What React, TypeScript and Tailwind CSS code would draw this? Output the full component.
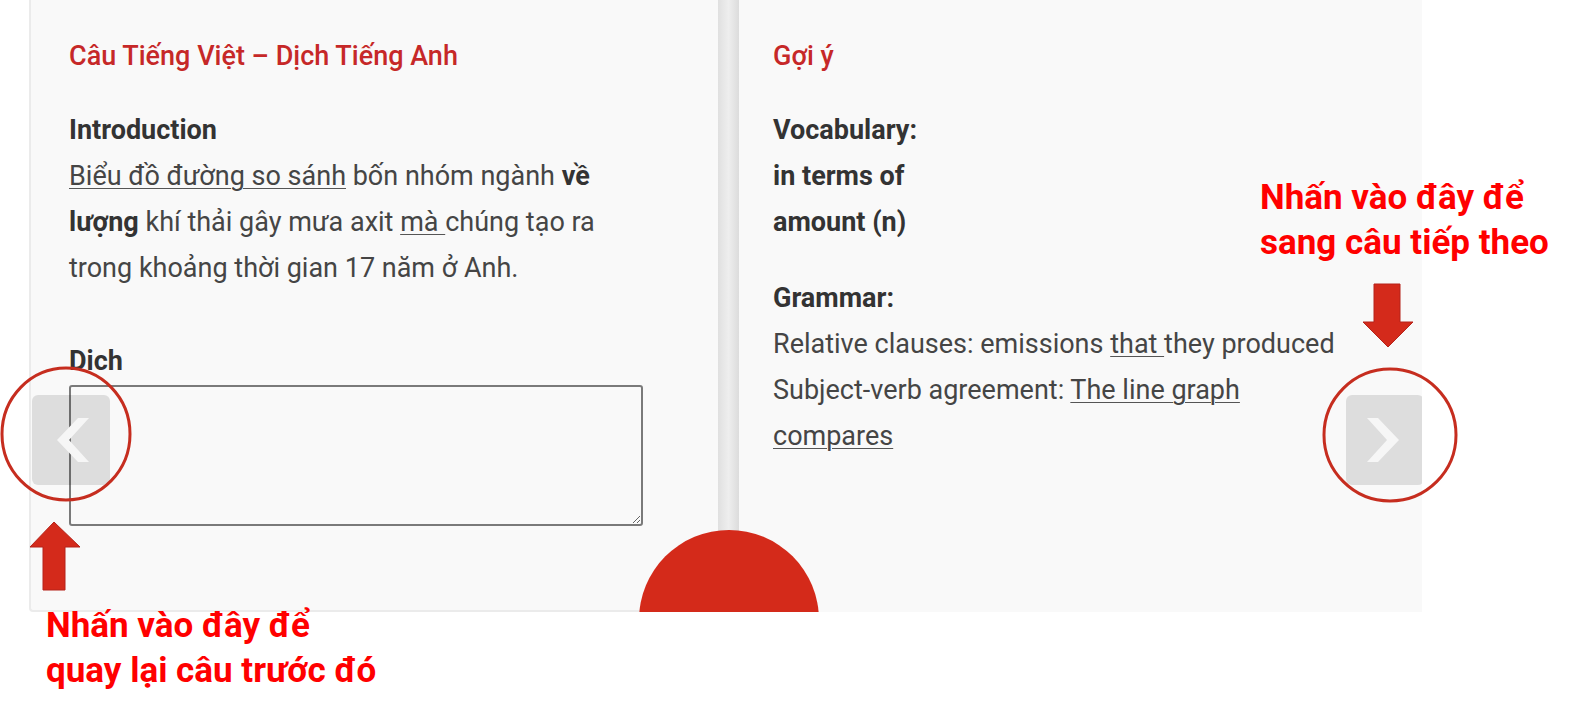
import React from "react";

function Chevron({ dir }: { dir: "left" | "right" }) {
    const pts =
        dir === "left"
            ? "25,45 46,23 57,23 37,45 57,67 46,67"
            : "53,45 32,23 21,23 41,45 21,67 32,67";
    return (
        <svg width="78" height="90" viewBox="0 0 78 90" className="block">
            <polygon points={pts} fill="#f6f6f6" />
        </svg>
    );
}

function Underlined({ children }: { children: React.ReactNode }) {
    return (
        <span className="underline decoration-[#555] decoration-1 underline-offset-[3px]">
            {children}
        </span>
    );
}

export default function App() {
    return (
        <div className="relative w-[1596px] h-[713px] bg-white overflow-hidden font-[Roboto,'Noto_Sans',sans-serif]">
            <div className="pl-[29px]">
                <div className="relative flex h-[612px] w-[1393px] overflow-hidden">
                    {/* left panel */}
                    <div className="w-[689px] bg-[#f9f9f9] border-l-2 border-b-2 border-[#ebebeb] rounded-bl-[4px] pl-[38px] pt-[33px] text-[27px] leading-[46px] text-[#454545]">
                        <h2 className="font-medium text-[#c62828]">Câu Tiếng Việt – Dịch Tiếng Anh</h2>
                        <div className="mt-[28px] font-bold text-[#333]">Introduction</div>
                        <p>
                            <Underlined>Biểu đồ đường so sánh</Underlined> bốn nhóm ngành{" "}
                            <b className="text-[#333]">về</b>
                            <br />
                            <b className="text-[#333]">lượng</b> khí thải gây mưa axit <Underlined>mà </Underlined>chúng tạo ra
                            <br />
                            trong khoảng thời gian 17 năm ở Anh.
                        </p>
                        <div className="mt-[47px] font-bold text-[#333]">Dich</div>
                        <textarea className="mt-[1px] block w-[574px] h-[141px] border-2 border-[#7a7a7a] rounded-[3px] bg-transparent outline-none" />
                    </div>

                    {/* divider */}
                    <div className="w-[21px] bg-linear-to-r from-[#e0e0e0] via-[#eeeeee] to-[#dcdcdc]" />

                    {/* right panel */}
                    <div className="w-[683px] bg-[#f9f9f9] pl-[34px] pt-[33px] text-[27px] leading-[46px] text-[#454545]">
                        <h2 className="font-medium text-[#c62828]">Gợi ý</h2>
                        <div className="mt-[28px] font-bold text-[#333]">
                            <div>Vocabulary:</div>
                            <div>in terms of</div>
                            <div>amount (n)</div>
                        </div>
                        <div className="mt-[30px] font-bold text-[#333]">Grammar:</div>
                        <div>
                            Relative clauses: emissions <Underlined>that </Underlined>they produced
                        </div>
                        <div>
                            Subject-verb agreement: <Underlined>The line graph</Underlined>
                        </div>
                        <div>
                            <Underlined>compares</Underlined>
                        </div>
                    </div>

                    {/* check button */}
                    <div className="absolute left-[610px] top-[530px] w-[180px] h-[180px] rounded-full bg-[#d42a1a]" />

                    {/* prev / next */}
                    <button className="absolute left-[3px] top-[395px] w-[78px] h-[90px] rounded-[6px] bg-black/[0.11]">
                        <Chevron dir="left" />
                    </button>
                    <button className="absolute left-[1317px] top-[395px] w-[78px] h-[90px] rounded-[6px] bg-black/[0.11]">
                        <Chevron dir="right" />
                    </button>
                </div>
            </div>

            {/* annotations */}
            <svg className="absolute left-0 top-0 pointer-events-none" width="1596" height="713">
                <ellipse cx="66" cy="434" rx="64" ry="66" fill="none" stroke="#c62d1f" strokeWidth="3" />
                <ellipse cx="1390" cy="435" rx="66" ry="66" fill="none" stroke="#c62d1f" strokeWidth="3" />
                <polygon
                    points="54,522 80,547 65,547 65,590 43,590 43,547 30,547"
                    fill="#d42a1b"
                    stroke="#b5231a"
                    strokeWidth="1"
                />
                <polygon
                    points="1388,347 1413,322 1400,322 1400,284 1374,284 1374,322 1363,322"
                    fill="#d42a1b"
                    stroke="#b5231a"
                    strokeWidth="1"
                />
            </svg>

            <div className="absolute left-[1260px] top-[175px] text-[35px] leading-[45px] font-bold text-[#f00]">
                <div>Nhấn vào đây để</div>
                <div>sang câu tiếp theo</div>
            </div>
            <div className="absolute left-[46px] top-[603px] text-[35px] leading-[45px] font-bold text-[#f00]">
                <div>Nhấn vào đây để</div>
                <div>quay lại câu trước đó</div>
            </div>
        </div>
    );
}
